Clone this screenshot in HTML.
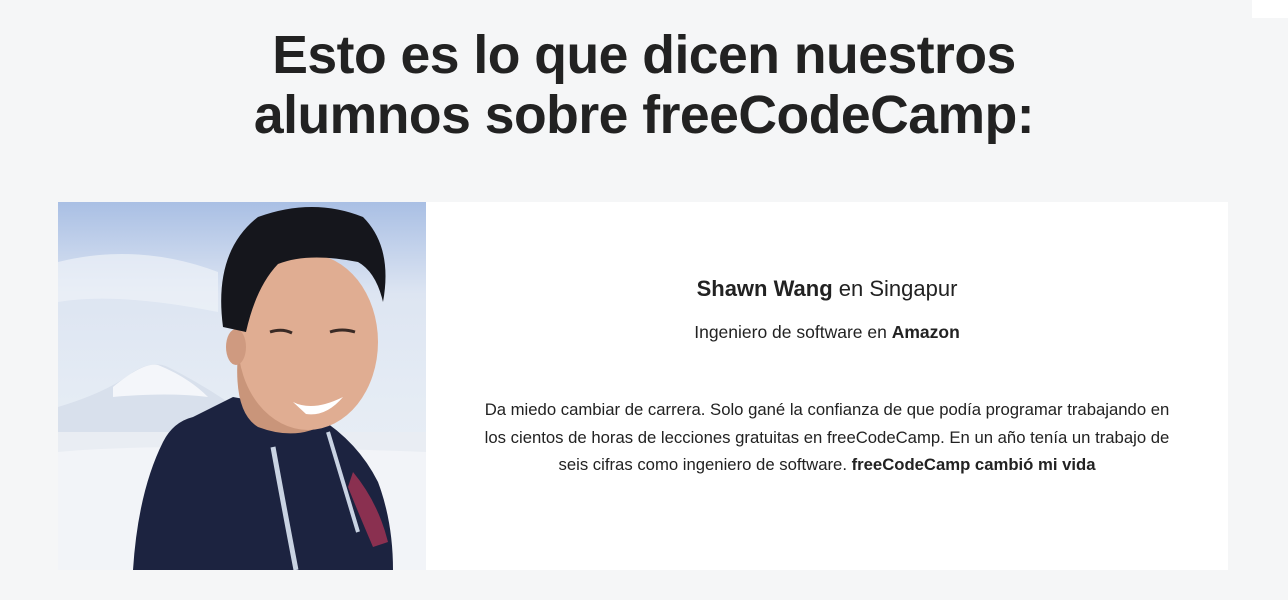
<!DOCTYPE html>
<html><head><meta charset="utf-8"><style>
body{margin:0;width:1288px;height:600px;background:#f5f6f7;font-family:"Liberation Sans",sans-serif;color:#1b1b32;overflow:hidden;position:relative}
h1{position:absolute;top:26px;left:0;width:1288px;margin:0;text-align:center;font-size:53.5px;line-height:60px;font-weight:bold;color:#222;letter-spacing:-0.5px}
.card{position:absolute;left:58px;top:202px;width:1170px;height:368px;background:#fff}
.photo{position:absolute;left:0;top:0;width:368px;height:368px}
.txt{position:absolute;left:368px;top:0;width:802px;text-align:center;color:#222}
.name{position:absolute;top:74px;width:100%;font-size:22px}
.job{position:absolute;top:120px;width:100%;font-size:17.5px}
.quote{position:absolute;top:194px;left:46px;width:710px;font-size:16.7px;line-height:27.5px}
.corner{position:absolute;right:0;top:0;width:36px;height:18px;background:#fff}
</style></head><body>
<div class="corner"></div>
<h1>Esto es lo que dicen nuestros<br>alumnos sobre freeCodeCamp:</h1>
<div class="card">
<svg class="photo" viewBox="0 0 368 368" width="368" height="368">
<defs><linearGradient id="sky" x1="0" y1="0" x2="0" y2="1"><stop offset="0" stop-color="#a9bfe4"/><stop offset="0.25" stop-color="#dde5f2"/><stop offset="0.5" stop-color="#e4ebf4"/><stop offset="1" stop-color="#eef2f7"/></linearGradient></defs>
<rect width="368" height="368" fill="url(#sky)"/>
<path d="M0 60 Q80 40 160 70 L160 110 Q60 90 0 100Z" fill="#eef2f8" opacity="0.7"/>
<path d="M0 205 Q50 190 75 170 Q95 158 110 165 Q140 180 170 200 L170 368 L0 368Z" fill="#d8e0ec"/>
<path d="M55 185 Q85 160 100 163 Q130 175 150 195 Q110 190 55 195Z" fill="#f4f6fa"/>
<rect x="0" y="230" width="368" height="138" fill="#e9edf3"/>
<path d="M0 250 Q100 240 368 250 L368 368 L0 368Z" fill="#f2f4f8"/>
<path d="M75 368 Q80 290 105 240 Q115 220 135 215 L175 195 Q230 205 260 215 Q300 240 320 280 Q335 320 335 368Z" fill="#1c2340"/>
<path d="M215 245 Q225 300 238 368" stroke="#c9d3e3" stroke-width="5" fill="none"/>
<path d="M270 230 Q285 280 300 330" stroke="#c9d3e3" stroke-width="4" fill="none"/>
<path d="M295 270 Q320 300 330 340 L315 345 Q300 310 290 285Z" fill="#8a3050"/>
<path d="M180 150 Q175 210 200 225 Q240 240 270 220 Q285 200 290 160Z" fill="#c9957a"/>
<ellipse cx="250" cy="140" rx="70" ry="88" fill="#e0ad92"/>
<ellipse cx="178" cy="145" rx="10" ry="18" fill="#cf9a80"/>
<path d="M165 125 Q155 50 200 15 Q255 -5 305 15 Q335 45 325 100 Q318 70 300 60 Q250 50 220 62 Q198 85 188 130 Z" fill="#15161c"/>
<path d="M235 200 Q255 210 285 195 Q268 215 248 212Z" fill="#fff"/>
<path d="M212 130 Q224 126 234 131" stroke="#3a2a25" stroke-width="3" fill="none"/>
<path d="M272 130 Q284 126 297 130" stroke="#3a2a25" stroke-width="3" fill="none"/>
</svg>
<div class="txt">
<div class="name"><b>Shawn Wang</b> en Singapur</div>
<div class="job">Ingeniero de software en <b>Amazon</b></div>
<div class="quote">Da miedo cambiar de carrera. Solo gané la confianza de que podía programar trabajando en los cientos de horas de lecciones gratuitas en freeCodeCamp. En un año tenía un trabajo de seis cifras como ingeniero de software. <b>freeCodeCamp cambió mi vida</b></div>
</div>
</div>
</body></html>
